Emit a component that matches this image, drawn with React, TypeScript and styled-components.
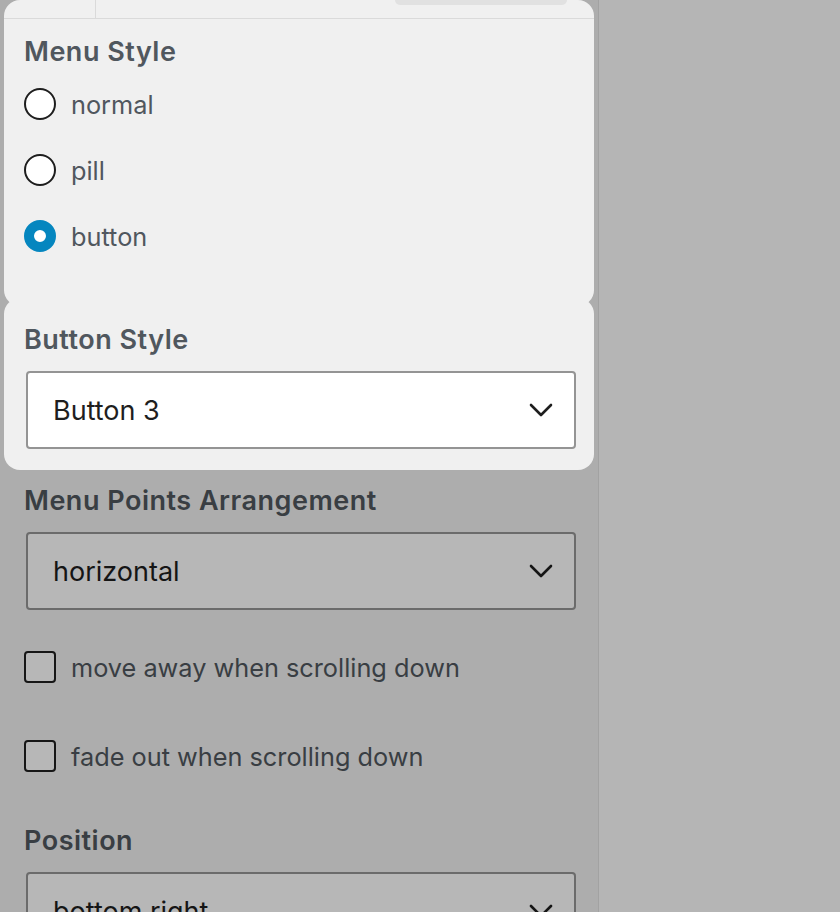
import * as React from "react";
import styled, { createGlobalStyle } from "styled-components";

const GlobalStyle = createGlobalStyle`
  html, body {
    margin: 0;
    padding: 0;
  }
  body {
    font-family: Inter, "Noto Sans", "Liberation Sans", sans-serif;
    background: #b5b5b5;
  }
`;

const Page = styled.div`
  display: flex;
  width: 840px;
  height: 912px;
  overflow: hidden;
`;

const Sidebar = styled.div`
  width: 598px;
  flex-shrink: 0;
  background: #adadad;
  border-right: 1px solid #a2a2a2;
  display: flex;
  flex-direction: column;
`;

const Canvas = styled.div`
  flex: 1;
  background: #b5b5b5;
`;

const Spotlight = styled.div<{ $overlap?: boolean }>`
  margin: ${(p) => (p.$overlap ? "-8px" : "0")} 4px 0 4px;
  background: #f0f0f0;
  border-radius: 16px;
  display: flex;
  flex-direction: column;
`;

const TabBar = styled.div`
  display: flex;
  height: 18px;
  border-bottom: 1px solid #dadada;
`;

const Tab = styled.div`
  width: 91px;
  border-right: 1px solid #dadada;
`;

const TabIndicator = styled.div`
  margin-left: auto;
  margin-right: 27px;
  width: 172px;
  height: 5px;
  background: #e1e1e1;
  border-radius: 0 0 7px 7px;
`;

const Section = styled.div<{ $top: number; $bottom: number; $inset: number }>`
  display: flex;
  flex-direction: column;
  padding: ${(p) => p.$top}px ${(p) => p.$inset - 2}px ${(p) => p.$bottom}px
    ${(p) => p.$inset}px;
`;

const Heading = styled.div<{ $dim?: boolean }>`
  padding-top: 4px;
  font-size: 27px;
  line-height: 28px;
  font-weight: 600;
  letter-spacing: 0.5px;
  color: ${(p) => (p.$dim ? "#393e43" : "#50575e")};
`;

const OptionList = styled.div<{ $gap: number; $top: number }>`
  display: flex;
  flex-direction: column;
  gap: ${(p) => p.$gap}px;
  margin-top: ${(p) => p.$top}px;
`;

const Option = styled.label<{ $dim?: boolean }>`
  display: flex;
  align-items: center;
  gap: 15px;
  height: 32px;
  font-size: 25.3px;
  color: ${(p) => (p.$dim ? "#393e43" : "#50575e")};
`;

const Radio = styled.span<{ $checked?: boolean }>`
  box-sizing: border-box;
  width: 32px;
  height: 32px;
  border-radius: 50%;
  background: #fff;
  border: ${(p) => (p.$checked ? "10px solid #0586bf" : "2px solid #1e1e1e")};
`;

const Checkbox = styled.span`
  box-sizing: border-box;
  width: 32px;
  height: 32px;
  border-radius: 4px;
  background: #b7b7b7;
  border: 2px solid #161616;
`;

const SelectBox = styled.div<{ $dim?: boolean }>`
  box-sizing: border-box;
  margin: 17px 0 0 2px;
  height: 78px;
  display: flex;
  align-items: center;
  justify-content: space-between;
  padding: 0 21px 0 25px;
  border: 2px solid ${(p) => (p.$dim ? "#6b6b6b" : "#949494")};
  border-radius: 4px;
  background: ${(p) => (p.$dim ? "#b7b7b7" : "#ffffff")};
  color: ${(p) => (p.$dim ? "#151515" : "#1e1e1e")};
  font-size: 27px;
`;

const Spacer = styled.div<{ $h: number }>`
  height: ${(p) => p.$h}px;
`;

const Chevron = () => (
  <svg width="24" height="24" viewBox="0 0 24 24" fill="none">
    <path
      d="M2 7 L12 17 L22 7"
      stroke="currentColor"
      strokeWidth="2.6"
      strokeLinecap="round"
      strokeLinejoin="round"
    />
  </svg>
);

const Select: React.FC<{ value: string; dim?: boolean }> = ({ value, dim }) => (
  <SelectBox $dim={dim}>
    <span>{value}</span>
    <Chevron />
  </SelectBox>
);

const menuStyles = ["normal", "pill", "button"];

export default function App() {
  return (
    <>
      <GlobalStyle />
      <Page>
        <Sidebar>
          <Spotlight>
            <TabBar>
              <Tab />
              <TabIndicator />
            </TabBar>
            <Section $top={15} $bottom={54} $inset={20}>
              <Heading>Menu Style</Heading>
              <OptionList $gap={34} $top={22}>
                {menuStyles.map((s) => (
                  <Option key={s}>
                    <Radio $checked={s === "button"} />
                    {s}
                  </Option>
                ))}
              </OptionList>
            </Section>
          </Spotlight>
          <Spotlight $overlap>
            <Section $top={24} $bottom={21} $inset={20}>
              <Heading>Button Style</Heading>
              <Select value="Button 3" />
            </Section>
          </Spotlight>
          <Section $top={13} $bottom={0} $inset={24}>
            <Heading $dim>Menu Points Arrangement</Heading>
            <Select value="horizontal" dim />
            <OptionList $gap={57} $top={41}>
              <Option $dim>
                <Checkbox />
                move away when scrolling down
              </Option>
              <Option $dim>
                <Checkbox />
                fade out when scrolling down
              </Option>
            </OptionList>
            <Spacer $h={51} />
            <Heading $dim>Position</Heading>
            <Select value="bottom right" dim />
          </Section>
        </Sidebar>
        <Canvas />
      </Page>
    </>
  );
}
